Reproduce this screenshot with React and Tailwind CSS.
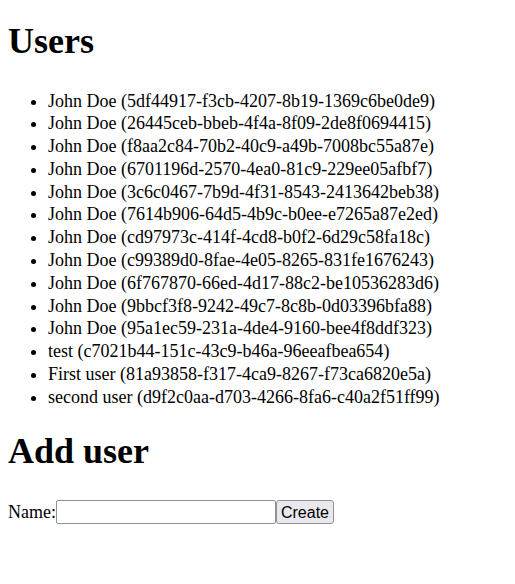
const users = [
  ["John Doe", "5df44917-f3cb-4207-8b19-1369c6be0de9"],
  ["John Doe", "26445ceb-bbeb-4f4a-8f09-2de8f0694415"],
  ["John Doe", "f8aa2c84-70b2-40c9-a49b-7008bc55a87e"],
  ["John Doe", "6701196d-2570-4ea0-81c9-229ee05afbf7"],
  ["John Doe", "3c6c0467-7b9d-4f31-8543-2413642beb38"],
  ["John Doe", "7614b906-64d5-4b9c-b0ee-e7265a87e2ed"],
  ["John Doe", "cd97973c-414f-4cd8-b0f2-6d29c58fa18c"],
  ["John Doe", "c99389d0-8fae-4e05-8265-831fe1676243"],
  ["John Doe", "6f767870-66ed-4d17-88c2-be10536283d6"],
  ["John Doe", "9bbcf3f8-9242-49c7-8c8b-0d03396bfa88"],
  ["John Doe", "95a1ec59-231a-4de4-9160-bee4f8ddf323"],
  ["test", "c7021b44-151c-43c9-b46a-96eeafbea654"],
  ["First user", "81a93858-f317-4ca9-8267-f73ca6820e5a"],
  ["second user", "d9f2c0aa-d703-4266-8fa6-c40a2f51ff99"],
];

function App() {
  return (
    <div className="min-h-screen bg-white text-black px-2 pt-[19px] font-['Liberation_Serif',serif]">
      <h1 className="text-[36px] font-bold leading-[44px]">Users</h1>

      <ul className="mt-[26.5px] pl-10 list-disc text-[18px] leading-[22.8px]">
        {users.map(([name, id]) => (
          <li key={id}>
            {name} ({id})
          </li>
        ))}
      </ul>

      <h1 className="mt-[20px] text-[36px] font-bold leading-[44px]">Add user</h1>

      <form className="mt-[27.5px] flex items-center" onSubmit={(e) => e.preventDefault()}>
        <label className="text-[18px] leading-6">Name:</label>
        <input
          type="text"
          className="w-[220px] h-6 border border-[#8f8f9d] rounded-[2px] bg-white px-1"
        />
        <button
          type="submit"
          className="h-6 w-[58px] border border-[#8f8f9d] rounded-[3px] bg-[#e9e9ed] text-[16px] font-['Liberation_Sans',sans-serif]"
        >
          Create
        </button>
      </form>
    </div>
  );
}

export default App;
